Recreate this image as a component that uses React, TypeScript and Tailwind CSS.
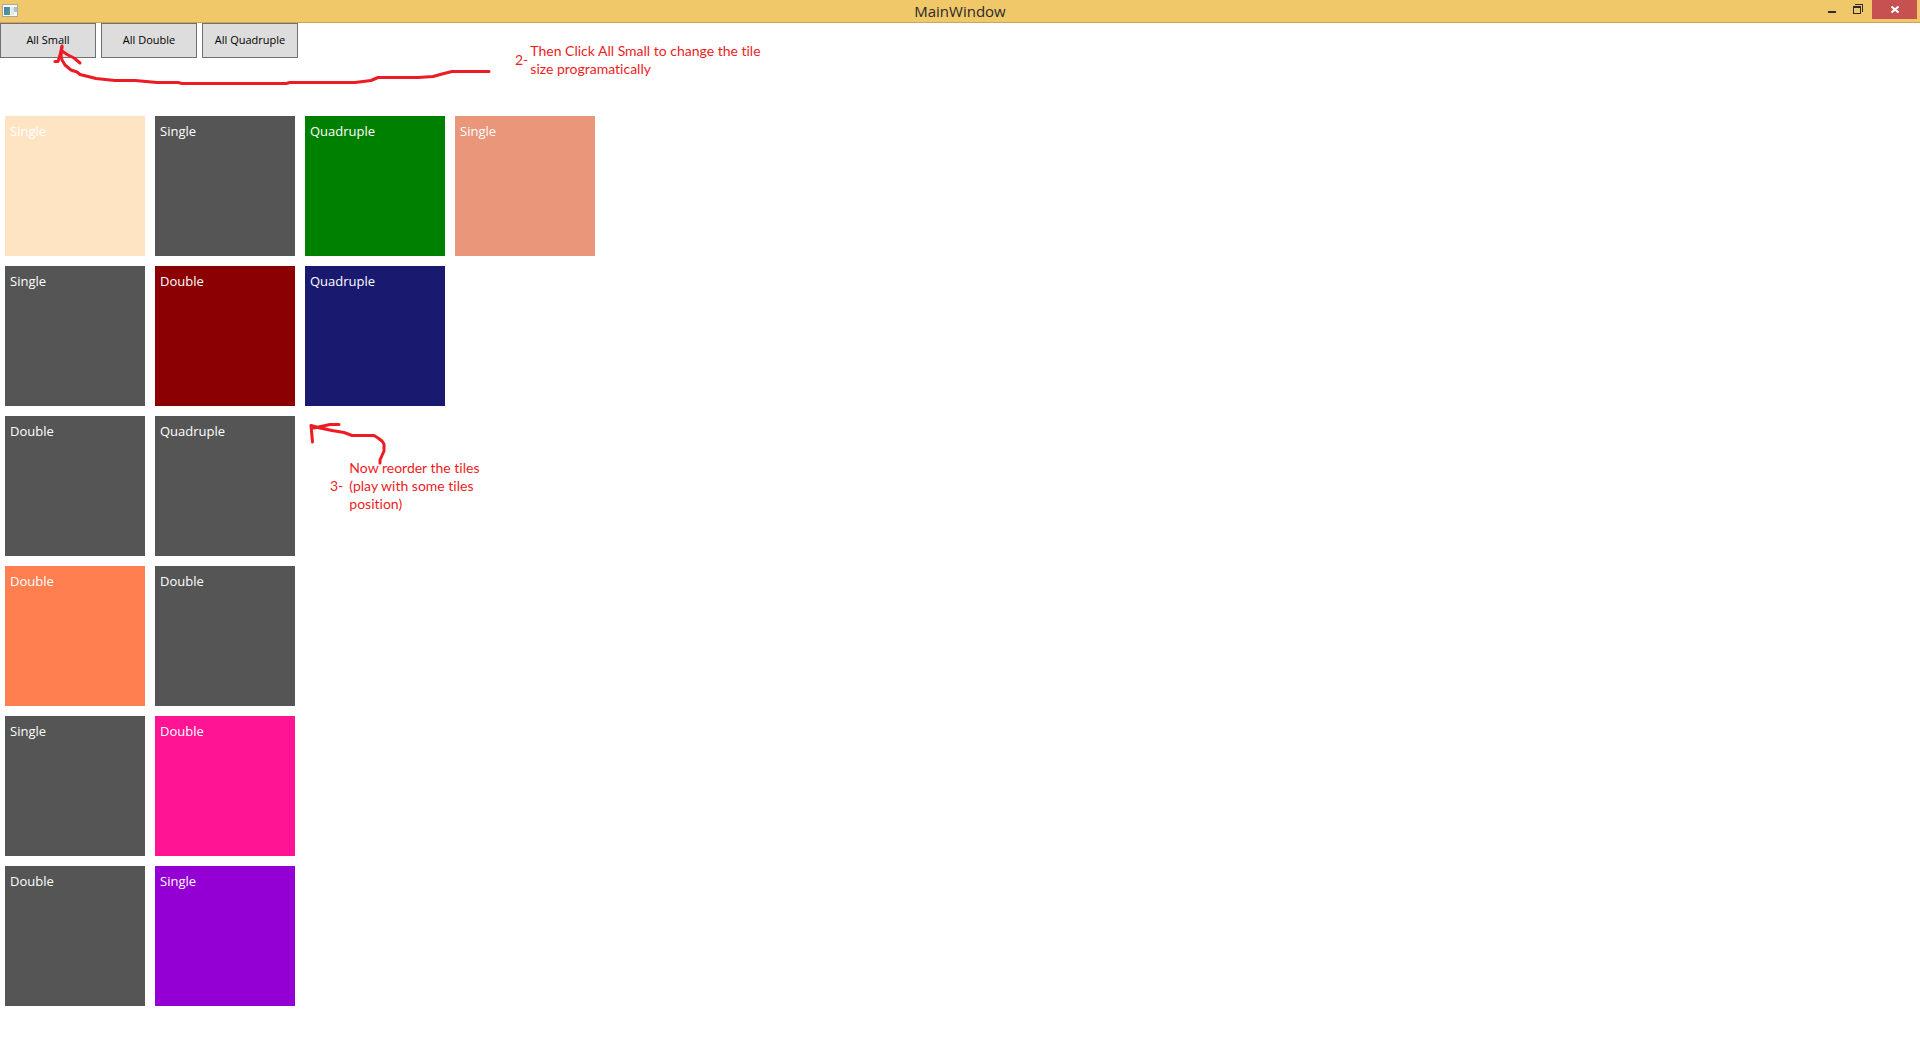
import { useState } from 'react';

type Tile = {
  label: string;
  color: string;
};

const TILE_ROWS: Tile[][] = [
  [
    { label: 'Single', color: 'bg-[#ffe4c4]' },
    { label: 'Single', color: 'bg-[#555555]' },
    { label: 'Quadruple', color: 'bg-[#008000]' },
    { label: 'Single', color: 'bg-[#e9967a]' },
  ],
  [
    { label: 'Single', color: 'bg-[#555555]' },
    { label: 'Double', color: 'bg-[#8b0000]' },
    { label: 'Quadruple', color: 'bg-[#191970]' },
  ],
  [
    { label: 'Double', color: 'bg-[#555555]' },
    { label: 'Quadruple', color: 'bg-[#555555]' },
  ],
  [
    { label: 'Double', color: 'bg-[#ff7f50]' },
    { label: 'Double', color: 'bg-[#555555]' },
  ],
  [
    { label: 'Single', color: 'bg-[#555555]' },
    { label: 'Double', color: 'bg-[#ff1493]' },
  ],
  [
    { label: 'Double', color: 'bg-[#555555]' },
    { label: 'Single', color: 'bg-[#9400d3]' },
  ],
];

const ACTIONS = ['All Small', 'All Double', 'All Quadruple'];

function AppIcon() {
  return (
    <svg width="16" height="14" viewBox="0 0 16 14" aria-hidden="true">
      <defs>
        <linearGradient id="pane" x1="0" y1="0" x2="1" y2="1">
          <stop offset="0" stopColor="#4a7fb5" />
          <stop offset="1" stopColor="#4fa37c" />
        </linearGradient>
      </defs>
      <rect x="0.5" y="0.5" width="15" height="12" fill="#f7f8f8" stroke="#a9a9a4" />
      <rect x="2" y="3" width="6" height="8" fill="url(#pane)" />
      <rect x="9" y="3" width="3" height="8" fill="#e3e5e6" />
      <rect x="12" y="3" width="3" height="5" fill="#a6c9c4" />
    </svg>
  );
}

function TitleBar() {
  return (
    <header className="grid h-[23px] grid-cols-[1fr_auto_1fr] border-b border-[#cba655] bg-[#f0c869] text-[#2b2b2b]">
      <div className="pt-1 pl-[2px]">
        <AppIcon />
      </div>
      <h1 className="text-[15px] leading-[23px]">MainWindow</h1>
      <div className="flex items-start justify-end pr-[3px]">
        <button type="button" aria-label="Minimize" className="flex h-[19px] w-[26px] justify-center">
          <svg width="8" height="19" viewBox="0 0 8 19">
            <path d="M0 11h8v2H0z" fill="#2b2b2b" />
          </svg>
        </button>
        <button type="button" aria-label="Restore" className="flex h-[19px] w-[27px] justify-center">
          <svg width="11" height="19" viewBox="0 0 11 19" fill="#2b2b2b">
            <path d="M0 6h8v8H0zM1 8v5h6V8z" fillRule="evenodd" />
            <path d="M2 4h8v8H9V5H2z" />
          </svg>
        </button>
        <button type="button" aria-label="Close" className="flex h-[19px] w-[45px] justify-center bg-[#c75050]">
          <svg width="8" height="19" viewBox="0 0 8 19">
            <path d="M0.5 6.5l7 6M7.5 6.5l-7 6" stroke="#fff" strokeWidth="2" />
          </svg>
        </button>
      </div>
    </header>
  );
}

// Red pen marks drawn over the window
function PenMarks() {
  return (
    <svg
      width="500"
      height="480"
      viewBox="0 0 500 480"
      fill="none"
      stroke="#ed1c24"
      strokeWidth="3"
      strokeLinecap="round"
      strokeLinejoin="round"
      className="pointer-events-none absolute top-0 left-0"
      aria-hidden="true"
    >
      <path d="M489 71.500H452L442 74L433 76.500L418 77.500H378L371 80.500L355 82.500H290L286 83.500H182L178 82.500H157L135 80.500H115L96 78.500L88 76.500L80 74.500L77 72L71 70L65 65L62 60L61 56L62 47" />
      <path d="M55 61.500H58L60 55L62 46M62 51L68 55L74 58L80 63" />
      <path d="M380 463V460L384 451V444L382 441L378 438L374 435.500H352L344 432.500L332 430.500L320 428L311 425.500L312.500 442M314 428L330 424.500H339M316 427L328 429.500" />
    </svg>
  );
}

export default function App() {
  const [, setLastAction] = useState('');

  return (
    <div className="relative min-h-screen bg-white font-['Open_Sans','Noto_Sans',sans-serif]">
      <TitleBar />

      <div className="flex gap-[5px]">
        {ACTIONS.map((action) => (
          <button
            key={action}
            type="button"
            onClick={() => setLastAction(action)}
            className="h-[35px] w-24 border border-[#707070] bg-[#dddddd] text-[11px] text-black"
          >
            {action}
          </button>
        ))}
      </div>

      <main className="flex flex-col gap-[10px] px-[5px] pt-[58px] pb-5">
        {TILE_ROWS.map((row, i) => (
          <div key={i} className="flex gap-[10px]">
            {row.map((tile, j) => (
              <div key={j} className={`h-[140px] w-[140px] px-[5px] pt-[5px] text-[13px] leading-5 text-white ${tile.color}`}>
                {tile.label}
              </div>
            ))}
          </div>
        ))}
      </main>

      <PenMarks />

      <div className="absolute top-[42px] left-[515px] flex items-center gap-[2px] font-['Lato',sans-serif] text-[14px] leading-[18px] text-[#ed1c24] [font-variant-ligatures:none]">
        <span>2-</span>
        <p>
          Then Click All Small to change the tile
          <br />
          size programatically
        </p>
      </div>

      <div className="absolute top-[459px] left-[330px] flex items-center gap-[6px] font-['Lato',sans-serif] text-[14px] leading-[18px] text-[#ed1c24] [font-variant-ligatures:none]">
        <span>3-</span>
        <p>
          Now reorder the tiles
          <br />
          (play with some tiles
          <br />
          position)
        </p>
      </div>
    </div>
  );
}
